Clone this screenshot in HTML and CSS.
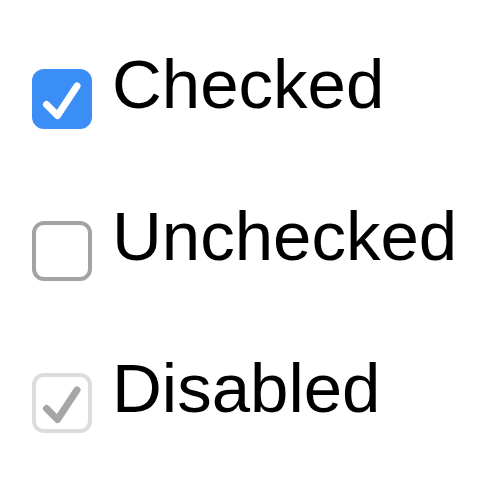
FILE: index.html
```html
<!DOCTYPE html>
<html lang="en">
<head>
  <meta charset="UTF-8">
  <title>Checkboxes</title>
  <link rel="stylesheet" href="styles.css">
</head>
<body>

  <div class="list">
    <label class="row">
      <span class="box checked">
        <svg viewBox="0 0 60 60"><path d="M14.5 35.5 L25.5 46.5 L45 17"/></svg>
      </span>
      <span class="text">Checked</span>
    </label>

    <label class="row">
      <span class="box"></span>
      <span class="text">Unchecked</span>
    </label>

    <label class="row">
      <span class="box disabled">
        <svg viewBox="0 0 60 60"><path d="M14.5 35.5 L25.5 46.5 L45 17"/></svg>
      </span>
      <span class="text">Disabled</span>
    </label>
  </div>

</body>
</html>
```

FILE: styles.css
```css
body {
  margin: 0;
  background: #ffffff;
  font-family: 'Liberation Sans', Arial, sans-serif;
  color: #000000;
}

.list {
  display: flex;
  flex-direction: column;
  gap: 73px;
  padding: 50px 0 0 32px;
}

.row {
  display: flex;
  align-items: flex-start;
  gap: 20px;
}

.box {
  box-sizing: border-box;
  width: 60px;
  height: 60px;
  margin-top: 19px;
  border: 4px solid #a3a3a3;
  border-radius: 12px;
  background: #ffffff;
  position: relative;
  flex-shrink: 0;
}

.box svg {
  position: absolute;
  left: -4px;
  top: -4px;
  width: 60px;
  height: 60px;
  fill: none;
  stroke-width: 7;
  stroke-linecap: round;
  stroke-linejoin: round;
}

.box.checked {
  background: #3a8ef6;
  border-color: #3a8ef6;
}

.box.checked svg {
  stroke: #ffffff;
}

.box.disabled {
  border-color: #dcdcdc;
}

.box.disabled svg {
  stroke: #a6a6a6;
}

.text {
  font-size: 69px;
  line-height: 69px;
}
```
